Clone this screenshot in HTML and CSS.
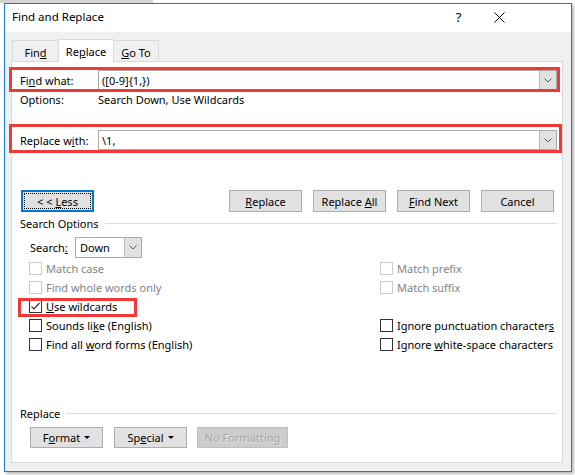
FILE: index.html
```html
<!DOCTYPE html>
<html>
<head>
<meta charset="utf-8">
<title>Find and Replace</title>
<link rel="stylesheet" href="styles.css">
</head>
<body>
<div class="strip"></div>
<div class="window">
  <div class="titlebar">
    <span class="title">Find and Replace</span>
    <span class="help">?</span>
    <span class="close"><svg width="11" height="11" viewBox="0 0 11 11"><path d="M0.5 0.5L10.5 10.5M10.5 0.5L0.5 10.5" stroke="#000" stroke-width="1" fill="none"/></svg></span>
  </div>
  <div class="client">
    <div class="tabs">
      <div class="tab t-find"><span>Fin<u>d</u></span></div>
      <div class="tab t-replace active"><span>Re<u>p</u>lace</span></div>
      <div class="tab t-goto"><span><u>G</u>o To</span></div>
    </div>
    <div class="panel">
      <div class="field-row r1">
        <span class="label">Fi<u>n</u>d what:</span>
        <div class="combo">
          <span class="val">([0-9]{1,})</span>
          <span class="dd"><svg width="8" height="5" viewBox="0 0 8 5"><path d="M0.5 0.5L4 4L7.5 0.5" stroke="#555" stroke-width="1" fill="none"/></svg></span>
        </div>
      </div>
      <div class="opt-row">
        <span class="label">Options:</span>
        <span>Search Down, Use Wildcards</span>
      </div>
      <div class="field-row r2">
        <span class="label">Replace w<u>i</u>th:</span>
        <div class="combo">
          <span class="val">\1,</span>
          <span class="dd"><svg width="8" height="5" viewBox="0 0 8 5"><path d="M0.5 0.5L4 4L7.5 0.5" stroke="#555" stroke-width="1" fill="none"/></svg></span>
        </div>
      </div>
      <div class="btn-row">
        <button class="btn less"><span class="focus"><span>&lt; &lt; <u>L</u>ess</span></span></button>
        <div class="btn-group">
          <button class="btn"><span><u>R</u>eplace</span></button>
          <button class="btn"><span>Replace <u>A</u>ll</span></button>
          <button class="btn"><span><u>F</u>ind Next</span></button>
          <button class="btn"><span>Cancel</span></button>
        </div>
      </div>
      <div class="group-head">
        <span>Search Options</span>
        <span class="rule"></span>
      </div>
      <div class="search-row">
        <span class="search-label">Search<u>:</u></span>
        <div class="select">
          <span class="val">Down</span>
          <span class="dd"><svg width="8" height="5" viewBox="0 0 8 5"><path d="M0.5 0.5L4 4L7.5 0.5" stroke="#555" stroke-width="1" fill="none"/></svg></span>
        </div>
      </div>
      <div class="checks">
        <div class="chk disabled"><span class="box"></span><span>Match case</span></div>
        <div class="chk disabled"><span class="box"></span><span>Match prefix</span></div>
        <div class="chk disabled"><span class="box"></span><span>Find whole words only</span></div>
        <div class="chk disabled"><span class="box"></span><span>Match suffix</span></div>
        <div class="chk"><span class="box"><svg width="11" height="11" viewBox="0 0 11 11"><path d="M1.5 5.5L4 8L9.5 2" stroke="#333" stroke-width="1.2" fill="none"/></svg></span><span><u>U</u>se wildcards</span></div>
        <div class="chk empty"></div>
        <div class="chk"><span class="box"></span><span>Sounds li<u>k</u>e (English)</span></div>
        <div class="chk"><span class="box"></span><span>Ignore punctuation character<u>s</u></span></div>
        <div class="chk"><span class="box"></span><span>Find all <u>w</u>ord forms (English)</span></div>
        <div class="chk"><span class="box"></span><span>Ignore <u>w</u>hite-space characters</span></div>
      </div>
      <div class="group-head replace-head">
        <span>Replace</span>
        <span class="rule"></span>
      </div>
      <div class="fmt-row">
        <button class="btn fmt"><span>F<u>o</u>rmat</span><span class="tri"></span></button>
        <button class="btn fmt special"><span>Sp<u>e</u>cial</span><span class="tri"></span></button>
        <button class="btn nofmt"><span>No Formatting</span></button>
      </div>
      <div class="note n1"></div>
      <div class="note n2"></div>
      <div class="note n3"></div>
    </div>
  </div>
</div>
</body>
</html>
```

FILE: styles.css
```css
* { box-sizing: border-box; }
html, body { margin: 0; padding: 0; }
body {
  width: 575px;
  height: 475px;
  overflow: hidden;
  background: #ffffff;
  font-family: "Noto Sans", "Open Sans", sans-serif;
  font-size: 11px;
  color: #000;
}
u { text-decoration: underline; text-underline-offset: 1px; }

.strip { width: 153px; height: 3px; background: #d4d4d4; }

.window {
  margin-left: 4px;
  width: 568px;
  height: 469px;
  border: 1px solid #1a7ad4;
  background: #f0f0f0;
  box-shadow: 2px 2px 3px rgba(0, 0, 0, 0.28);
  display: flex;
  flex-direction: column;
}

.titlebar {
  height: 28px;
  background: #fff;
  display: flex;
  align-items: center;
  padding-left: 7px;
  padding-right: 51px;
  padding-bottom: 3px;
  flex: none;
}
.title { font-size: 11.5px; }
.help { margin-left: auto; width: 41px; text-align: center; font-size: 13px; }
.close { width: 41px; display: flex; justify-content: center; padding-top: 1px; }

.client {
  flex: 1;
  padding-top: 7px;
  padding-left: 6px;
}

.tabs {
  height: 22px;
  margin-left: 1px;
  display: flex;
  align-items: flex-end;
}
.tab {
  height: 21px;
  border: 1px solid #d9d9d9;
  border-bottom: none;
  background: #f0f0f0;
  display: flex;
  align-items: center;
  justify-content: center;
  padding-top: 2px;
}
.t-find { width: 47px; }
.t-replace { width: 56px; margin-left: -1px; }
.t-goto { width: 46px; margin-left: -1px; }
.tab.active {
  height: 23px;
  margin-bottom: -1px;
  background: #fff;
  position: relative;
  z-index: 2;
  padding-top: 1px;
}

.panel {
  position: relative;
  width: 552px;
  height: 402px;
  border: 1px solid #d9d9d9;
  background: #fff;
  padding-left: 8px;
}

.label { width: 78px; flex: none; }

.field-row {
  display: flex;
  align-items: center;
  height: 20px;
}
.r1 { margin-top: 8px; }
.r2 { margin-top: 22px; }

.combo {
  width: 459px;
  height: 20px;
  border: 1px solid #a9a9a9;
  background: #fff;
  display: flex;
  align-items: center;
}
.combo .val { flex: 1; padding-left: 3px; }
.dd {
  width: 17px;
  height: 100%;
  background: #e1e1e1;
  border-left: 1px solid #b9b9b9;
  display: flex;
  align-items: center;
  justify-content: center;
}

.opt-row {
  height: 18px;
  display: flex;
  align-items: center;
}

.btn-row {
  margin-top: 40px;
  height: 22px;
  display: flex;
}
.btn {
  width: 73px;
  height: 22px;
  padding: 0;
  background: #e1e1e1;
  border: 1px solid #adadad;
  font: inherit;
  color: #000;
  display: flex;
  align-items: center;
  justify-content: center;
  white-space: nowrap;
}
.less {
  margin-left: 1px;
  border-color: #0078d7;
  box-shadow: inset 0 0 0 1px #0078d7;
  padding: 2px;
}
.less .focus {
  flex: 1;
  align-self: stretch;
  border: 1px dotted #000;
  display: flex;
  align-items: center;
  justify-content: center;
}
.btn-group {
  margin-left: 135px;
  display: flex;
  gap: 11px;
}

.group-head {
  margin-top: 4px;
  height: 14px;
  display: flex;
  align-items: center;
}
.group-head .rule {
  flex: 1;
  height: 1px;
  background: #dcdcdc;
  margin-left: 6px;
  margin-right: 5px;
}

.search-row {
  margin-top: 7px;
  height: 21px;
  padding-left: 10px;
  display: flex;
  align-items: center;
}
.search-label { width: 45px; }
.select {
  width: 67px;
  height: 21px;
  border: 1px solid #a9a9a9;
  display: flex;
  align-items: center;
}
.select .val { flex: 1; padding-left: 4px; }

.checks {
  margin-top: 1px;
  padding-left: 9px;
  display: grid;
  grid-template-columns: 351px 1fr;
  grid-auto-rows: 19px;
}
.chk {
  display: flex;
  align-items: center;
  gap: 4px;
}
.box {
  width: 13px;
  height: 13px;
  border: 1px solid #333;
  background: #fff;
  display: flex;
  align-items: center;
  justify-content: center;
  flex: none;
}
.chk.disabled { color: #838383; }
.chk.disabled .box { border-color: #cccccc; }

.replace-head { margin-top: 52px; }

.fmt-row {
  margin-top: 7px;
  height: 21px;
  padding-left: 10px;
  display: flex;
}
.fmt-row .btn { height: 21px; }
.special { margin-left: 11px; }
.tri {
  width: 0;
  height: 0;
  border-left: 3px solid transparent;
  border-right: 3px solid transparent;
  border-top: 3px solid #000;
  margin-left: 4px;
}
.nofmt {
  width: 91px;
  margin-left: 10px;
  background: #cccccc;
  border-color: #bfbfbf;
  color: #a6a6a6;
  text-shadow: 1px 1px 0 #e6e6e6;
}

.note {
  position: absolute;
  border: 3px solid #f03a3a;
  pointer-events: none;
}
.n1 { left: -3px; top: 5px; width: 551px; height: 25px; }
.n2 { left: -3px; top: 62px; width: 553px; height: 29px; }
.n3 { left: 6px; top: 236px; width: 119px; height: 19px; }
```
